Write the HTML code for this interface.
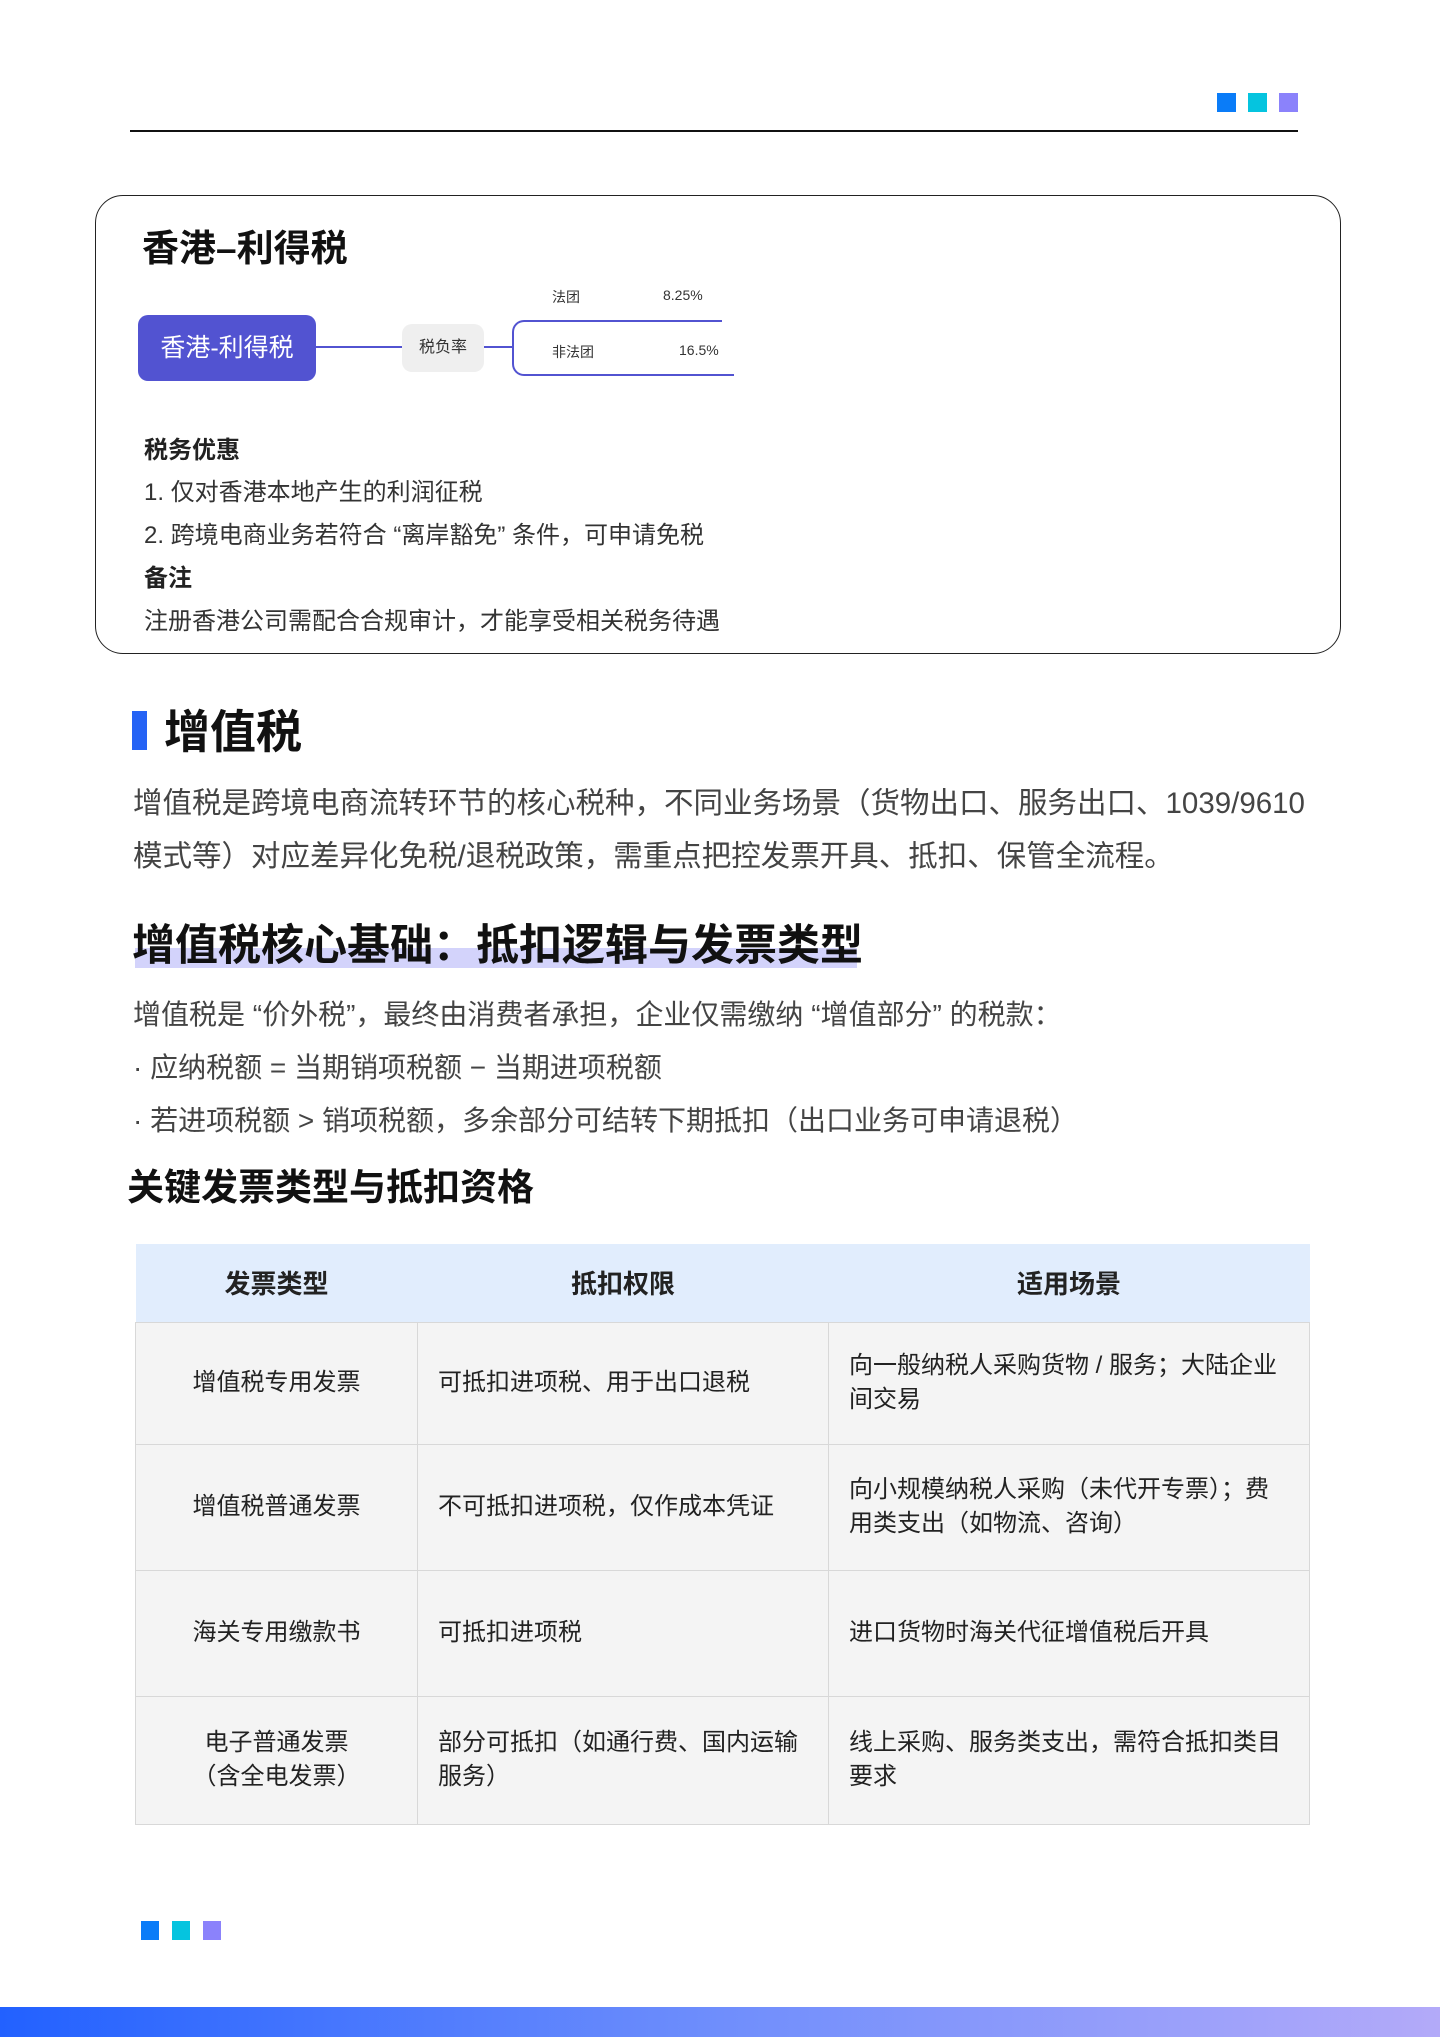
<!DOCTYPE html>
<html><head><meta charset="utf-8">
<style>
*{margin:0;padding:0;box-sizing:border-box}
body{width:1440px;height:2037px;position:relative;background:#fff;font-family:"Liberation Sans","Noto Sans CJK SC",sans-serif;color:#222;overflow:hidden}
.a{position:absolute;white-space:nowrap}
.sq{position:absolute;width:19px;height:19px}
.card{position:absolute;left:95px;top:195px;width:1246px;height:459px;border:1.5px solid #222;border-radius:28px}
.p{font-size:24px;color:#333}
table{position:absolute;left:135px;top:1244px;width:1175px;border-collapse:collapse;font-size:24px;color:#222}
th{background:#e1edfd;height:78px;font-size:26px;font-weight:bold}
td{background:#f4f4f4;border:1.5px solid #d8d8d8;padding:0 20px;line-height:34px}
td.c{text-align:center}
</style></head><body>
<div class="sq" style="left:1217px;top:93px;background:#0a7cf8"></div>
<div class="sq" style="left:1248px;top:93px;background:#05c4df"></div>
<div class="sq" style="left:1279px;top:93px;background:#8b82fb"></div>
<div class="a" style="left:130px;top:130px;width:1168px;height:2px;background:#111"></div>

<div class="card"></div>
<div class="a" style="left:142px;top:218px;font-size:37px;font-weight:bold;color:#111">香港–利得税</div>
<div class="a" style="left:138px;top:315px;width:178px;height:66px;background:#5253d1;border-radius:10px;color:#fff;font-size:25px;line-height:66px;text-align:center">香港-利得税</div>
<div class="a" style="left:316px;top:346px;width:86px;height:2px;background:#5253d1"></div>
<div class="a" style="left:402px;top:324px;width:82px;height:48px;background:#efefef;border-radius:10px;font-size:16px;line-height:48px;text-align:center;color:#333">税负率</div>
<div class="a" style="left:484px;top:346px;width:28px;height:2px;background:#5253d1"></div>
<div class="a" style="left:512px;top:320px;width:210px;height:56px;border:2px solid #5253d1;border-right:none;border-radius:12px 0 0 12px"></div>
<div class="a" style="left:700px;top:374px;width:34px;height:2px;background:#5253d1"></div>
<div class="a" style="left:552px;top:287px;font-size:14px;color:#333">法团</div>
<div class="a" style="left:663px;top:287px;font-size:14px;color:#333">8.25%</div>
<div class="a" style="left:552px;top:342px;font-size:14px;color:#333">非法团</div>
<div class="a" style="left:679px;top:342px;font-size:14px;color:#333">16.5%</div>
<div class="a p" style="left:144px;top:430px;font-weight:bold;color:#222">税务优惠</div>
<div class="a p" style="left:144px;top:472px">1. 仅对香港本地产生的利润征税</div>
<div class="a p" style="left:144px;top:515px">2. 跨境电商业务若符合 “离岸豁免” 条件，可申请免税</div>
<div class="a p" style="left:144px;top:558px;font-weight:bold;color:#222">备注</div>
<div class="a p" style="left:144px;top:601px">注册香港公司需配合合规审计，才能享受相关税务待遇</div>

<div class="a" style="left:132px;top:711px;width:15px;height:39px;background:#2563f5"></div>
<div class="a" style="left:164px;top:696px;font-size:46px;font-weight:bold;color:#111">增值税</div>
<div class="a" style="left:133px;top:777px;font-size:29.5px;color:#444;line-height:53px;white-space:normal;width:1230px">增值税是跨境电商流转环节的核心税种，不同业务场景（货物出口、服务出口、1039/9610<br>模式等）对应差异化免税/退税政策，需重点把控发票开具、抵扣、保管全流程。</div>
<div class="a" style="left:135px;top:948px;width:722px;height:20px;background:#d3d3fb"></div>
<div class="a" style="left:132px;top:911px;font-size:43px;font-weight:bold;color:#111">增值税核心基础：抵扣逻辑与发票类型</div>
<div class="a" style="left:133px;top:993px;font-size:28px;color:#444">增值税是 “价外税”，最终由消费者承担，企业仅需缴纳 “增值部分” 的税款：</div>
<div class="a" style="left:133px;top:1046px;font-size:28px;color:#444">· 应纳税额 = 当期销项税额 − 当期进项税额</div>
<div class="a" style="left:133px;top:1099px;font-size:28px;color:#444">· 若进项税额 &gt; 销项税额，多余部分可结转下期抵扣（出口业务可申请退税）</div>
<div class="a" style="left:127px;top:1157px;font-size:37px;font-weight:bold;color:#111">关键发票类型与抵扣资格</div>

<table>
<tr><th style="width:282px">发票类型</th><th style="width:411px">抵扣权限</th><th>适用场景</th></tr>
<tr style="height:122px"><td class="c">增值税专用发票</td><td>可抵扣进项税、用于出口退税</td><td>向一般纳税人采购货物 / 服务；大陆企业间交易</td></tr>
<tr style="height:126px"><td class="c">增值税普通发票</td><td>不可抵扣进项税，仅作成本凭证</td><td>向小规模纳税人采购（未代开专票）；费用类支出（如物流、咨询）</td></tr>
<tr style="height:126px"><td class="c">海关专用缴款书</td><td>可抵扣进项税</td><td>进口货物时海关代征增值税后开具</td></tr>
<tr style="height:128px"><td class="c">电子普通发票<br>（含全电发票）</td><td>部分可抵扣（如通行费、国内运输服务）</td><td>线上采购、服务类支出，需符合抵扣类目要求</td></tr>
</table>

<div class="sq" style="left:141px;top:1921px;width:18px;background:#0a7cf8"></div>
<div class="sq" style="left:172px;top:1921px;width:18px;background:#05c4df"></div>
<div class="sq" style="left:203px;top:1921px;width:18px;background:#8b82fb"></div>
<div class="a" style="left:0;top:2007px;width:1440px;height:30px;background:linear-gradient(90deg,#2261ff,#6f8efc 50%,#b3aaf9)"></div>
</body></html>
